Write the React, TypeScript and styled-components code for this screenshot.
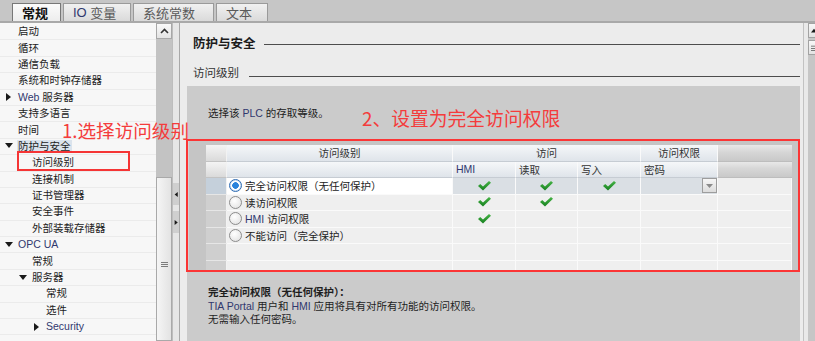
import React from "react";
import styled, { createGlobalStyle } from "styled-components";

const GlobalStyle = createGlobalStyle`
  html, body { margin: 0; padding: 0; }
  body {
    font-family: "Liberation Sans", "Noto Sans CJK SC", sans-serif;
    background: #c6c6c6;
    color: #1c1c1c;
  }
  * { box-sizing: border-box; }
`;

type NavEntry = {
  label: React.ReactNode;
  level: number;
  arrow?: "right" | "down";
  active?: boolean;
};

type AccessRow = {
  label?: React.ReactNode;
  on?: boolean;
  hmi?: boolean;
  read?: boolean;
  write?: boolean;
  dropdown?: boolean;
};

const navItems: NavEntry[] = [
  { label: "启动", level: 0 },
  { label: "循环", level: 0 },
  { label: "通信负载", level: 0 },
  { label: "系统和时钟存储器", level: 0 },
  { label: <><Latin>Web</Latin> 服务器</>, level: 0, arrow: "right" },
  { label: "支持多语言", level: 0 },
  { label: "时间", level: 0 },
  { label: "防护与安全", level: 0, arrow: "down", active: true },
  { label: "访问级别", level: 1 },
  { label: "连接机制", level: 1 },
  { label: "证书管理器", level: 1 },
  { label: "安全事件", level: 1 },
  { label: "外部装载存储器", level: 1 },
  { label: <Latin>OPC UA</Latin>, level: 0, arrow: "down" },
  { label: "常规", level: 1 },
  { label: "服务器", level: 1, arrow: "down" },
  { label: "常规", level: 2 },
  { label: "选件", level: 2 },
  { label: <Latin>Security</Latin>, level: 2, arrow: "right" },
];

const accessRows: AccessRow[] = [
  { label: "完全访问权限（无任何保护）", on: true, hmi: true, read: true, write: true, dropdown: true },
  { label: "读访问权限", hmi: true, read: true },
  { label: <><Latin>HMI</Latin> 访问权限</>, hmi: true },
  { label: "不能访问（完全保护）" },
  {},
  {},
];

function Latin({ children }: { children: React.ReactNode }) {
  return <LatinText>{children}</LatinText>;
}

const Arrow = ({ dir }: { dir: "right" | "down" | "left" | "up" }) => {
  const pts = {
    right: "1,0 6,4 1,8",
    left: "6,0 1,4 6,8",
    down: "0,1 8,1 4,6",
    up: "0,6 8,6 4,1",
  }[dir];
  return (
    <svg width="8" height="8" viewBox="0 0 8 8">
      <polygon points={pts} fill="#1a1a1a" />
    </svg>
  );
};

const Check = () => (
  <svg width="13" height="10" viewBox="0 0 13 10">
    <defs>
      <linearGradient id="ck" x1="0" y1="0" x2="0" y2="1">
        <stop offset="0" stopColor="#46b446" />
        <stop offset="1" stopColor="#16801f" />
      </linearGradient>
    </defs>
    <polygon points="0,5 2.2,3 5,5.6 11,0 13,1.8 5,9.6" fill="url(#ck)" />
  </svg>
);

const App = () => {
  return (
    <Page>
      <GlobalStyle />
      <TabBar>
        <Tab $active $w={49}>常规</Tab>
        <Tab $w={68}><Latin>IO</Latin>&nbsp;变量</Tab>
        <Tab $w={81}>系统常数</Tab>
        <Tab $w={52}>文本</Tab>
      </TabBar>

      <Body>
        <NavPanel>
          {navItems.map((item, i) => (
            <NavRow key={i} $level={item.level}>
              <ArrowSlot>{item.arrow && <Arrow dir={item.arrow} />}</ArrowSlot>
              <NavLabel $active={item.active}>{item.label}</NavLabel>
            </NavRow>
          ))}
        </NavPanel>

        <VScroll>
          <ScrollBtn>
            <svg width="9" height="6" viewBox="0 0 9 6">
              <polyline points="1,5 4.5,1.5 8,5" fill="none" stroke="#333" strokeWidth="1.6" />
            </svg>
          </ScrollBtn>
          <Track />
          <Thumb>
            <Grip>
              <span />
              <span />
              <span />
            </Grip>
          </Thumb>
        </VScroll>

        <Splitter>
          <SplitBtn><Arrow dir="left" /></SplitBtn>
          <SplitBtn><Arrow dir="right" /></SplitBtn>
        </Splitter>

        <Content>
          <TitleRow $top={10}>
            <Title $bold>防护与安全</Title>
            <Rule $gap={8} $shift={5} />
          </TitleRow>
          <TitleRow $top={12}>
            <Title>访问级别</Title>
            <Rule $gap={10} $shift={8} />
          </TitleRow>

          <GrayBox>
            <IntroRow>
              <Intro>选择该 <Latin>PLC</Latin> 的存取等级。</Intro>
              <Callout>2、设置为完全访问权限</Callout>
            </IntroRow>

            <RedFrame>
              <TableArea>
                <Grid>
                  <RowHead $header />
                  <HeadCell $center>访问级别</HeadCell>
                  <HeadCell $center $span={3}>访问</HeadCell>
                  <HeadCell $center>访问权限</HeadCell>
                  <FillHead />

                  <RowHead $header />
                  <HeadCell />
                  <HeadCell><Latin>HMI</Latin></HeadCell>
                  <HeadCell>读取</HeadCell>
                  <HeadCell>写入</HeadCell>
                  <HeadCell>密码</HeadCell>
                  <FillHead />

                  {accessRows.map((row, i) => (
                    <React.Fragment key={i}>
                      <RowHead $selected={row.on} />
                      <NameCell $selected={row.on}>
                        {row.label && (
                          <>
                            <Radio $on={row.on} />
                            <span>{row.label}</span>
                          </>
                        )}
                      </NameCell>
                      <Cell $selected={row.on} $center>{row.hmi && <Check />}</Cell>
                      <Cell $selected={row.on} $center>{row.read && <Check />}</Cell>
                      <Cell $selected={row.on} $center>{row.write && <Check />}</Cell>
                      <Cell $selected={row.on}>
                        {row.dropdown && (
                          <DropBtn>
                            <svg width="7" height="4" viewBox="0 0 7 4">
                              <polygon points="0,0 7,0 3.5,4" fill="#8a8a8a" />
                            </svg>
                          </DropBtn>
                        )}
                      </Cell>
                      <Cell />
                    </React.Fragment>
                  ))}
                </Grid>
              </TableArea>
            </RedFrame>

            <Desc>
              <strong>完全访问权限（无任何保护）：</strong>
              <div><Latin>TIA Portal</Latin> 用户和 <Latin>HMI</Latin> 应用将具有对所有功能的访问权限。</div>
              <div>无需输入任何密码。</div>
            </Desc>
          </GrayBox>
        </Content>

        <RightScroll>
          <RightStrip />
          <RightTrack>
            <SmallBtn><Arrow dir="up" /></SmallBtn>
            <SmallBtn>
              <svg width="8" height="8" viewBox="0 0 8 8">
                <rect x="0" y="1" width="8" height="1" fill="#555" />
                <rect x="0" y="4" width="8" height="1" fill="#555" />
                <rect x="0" y="7" width="8" height="1" fill="#555" />
              </svg>
            </SmallBtn>
          </RightTrack>
        </RightScroll>

        <Annotation>1.选择访问级别</Annotation>
        <MarkBox />
      </Body>
    </Page>
  );
};

const LatinText = styled.span`
  color: #30386e;
`;

const Page = styled.div`
  width: 815px;
  height: 341px;
  overflow: hidden;
  display: flex;
  flex-direction: column;
`;

const TabBar = styled.div`
  height: 23px;
  display: flex;
  align-items: flex-end;
  gap: 2px;
  padding-left: 12px;
  background: #c6c6c6;
  border-bottom: 2px solid #a9a9a9;
`;

const Tab = styled.div<{ $active?: boolean; $w: number }>`
  width: ${(p) => p.$w}px;
  height: 18px;
  display: flex;
  align-items: center;
  padding-left: 9px;
  font-size: 13px;
  font-weight: ${(p) => (p.$active ? 700 : 400)};
  color: ${(p) => (p.$active ? "#111" : "#5a5a5a")};
  background: ${(p) =>
    p.$active
      ? "linear-gradient(#fbfbfb, #ededed)"
      : "linear-gradient(#f1f1f1, #dadada)"};
  border: 1px solid ${(p) => (p.$active ? "#777" : "#9a9a9a")};
  border-bottom: none;
`;

const Body = styled.div`
  position: relative;
  flex: 1;
  display: flex;
  min-height: 0;
`;

const NavPanel = styled.div`
  width: 156px;
  background: #f7f7f7;
  padding-top: 1px;
  overflow: hidden;
`;

const NavRow = styled.div<{ $level: number }>`
  height: 16.4px;
  display: flex;
  align-items: center;
  padding-left: ${(p) => 4 + p.$level * 14}px;
  border-bottom: 1px solid #ebebeb;
  font-size: 10.5px;
  white-space: nowrap;
`;

const ArrowSlot = styled.div`
  width: 14px;
  display: flex;
  align-items: center;
  padding-left: 1px;
`;

const NavLabel = styled.span<{ $active?: boolean }>`
  line-height: 13px;
  padding: 0 1px;
  margin-left: -1px;
  background: ${(p) => (p.$active ? "#dbe3ec" : "transparent")};
`;

const VScroll = styled.div`
  width: 16px;
  display: flex;
  flex-direction: column;
  background: #c4c4c4;
`;

const ScrollBtn = styled.div`
  height: 16px;
  display: flex;
  align-items: center;
  justify-content: center;
  background: linear-gradient(#fafafa, #e3e3e3);
  border: 1px solid #a7a7a7;
`;

const Track = styled.div`
  height: 138px;
  background: #c3c3c3;
`;

const Thumb = styled.div`
  flex: 1;
  display: flex;
  justify-content: center;
  padding-top: 84px;
  background: linear-gradient(90deg, #f5f5f5, #e3e3e3);
  border: 1px solid #a9a9a9;
`;

const Grip = styled.div`
  display: flex;
  flex-direction: column;
  gap: 1px;
  span {
    display: block;
    width: 7px;
    height: 1px;
    background: #7c7c7c;
  }
`;

const Splitter = styled.div`
  width: 8px;
  display: flex;
  flex-direction: column;
  gap: 6px;
  padding-top: 160px;
  background: #e6e6e6;
  border-left: 1px solid #bdbdbd;
  border-right: 1px solid #a8a8a8;
`;

const SplitBtn = styled.div`
  height: 22px;
  display: flex;
  align-items: center;
  justify-content: center;
  background: #cfcfcf;
  svg {
    width: 5px;
    height: 5px;
  }
`;

const Content = styled.div`
  flex: 1;
  min-width: 0;
  display: flex;
  flex-direction: column;
  padding: 0 3px 0 7px;
  background: #ececec;
`;

const TitleRow = styled.div<{ $top: number }>`
  height: 18px;
  margin-top: ${(p) => p.$top}px;
  padding-left: 6px;
  display: flex;
  align-items: center;
`;

const Title = styled.span<{ $bold?: boolean }>`
  font-size: ${(p) => (p.$bold ? "12.5px" : "11.5px")};
  font-weight: ${(p) => (p.$bold ? 700 : 400)};
  color: ${(p) => (p.$bold ? "#1c1c1c" : "#333")};
  white-space: nowrap;
`;

const Rule = styled.div<{ $gap: number; $shift: number }>`
  flex: 1;
  height: 1px;
  margin-left: ${(p) => p.$gap}px;
  margin-top: ${(p) => p.$shift}px;
  background: #4d4d4d;
`;

const GrayBox = styled.div`
  flex: 1;
  margin-top: 5px;
  background: #cbcbcb;
`;

const IntroRow = styled.div`
  height: 53px;
  display: flex;
  align-items: flex-start;
  padding: 20px 0 0 21px;
`;

const Intro = styled.span`
  width: 154px;
  font-size: 10.5px;
  line-height: 14px;
  color: #222;
`;

const Callout = styled.span`
  margin-top: 1px;
  font-family: "Noto Sans CJK SC", sans-serif;
  font-size: 18.8px;
  line-height: 22px;
  color: #f43c3c;
  white-space: nowrap;
`;

const RedFrame = styled.div`
  width: 614px;
  height: 133px;
  margin-left: -1px;
  border: 2px solid #fb3535;
  background: #d3d3d3;
  padding: 0 0 0 1px;
`;

const TableArea = styled.div`
  height: 100%;
  overflow: hidden;
  padding: 4px 6px 0 17px;
  background: #c5c5c5;
`;

const Grid = styled.div`
  display: grid;
  grid-template-columns: 21px 226px 63px 62px 63px 77px 74px;
  grid-auto-rows: 16.5px;
  font-size: 10.5px;
  color: #222;
`;

const RowHead = styled.div<{ $header?: boolean; $selected?: boolean }>`
  border-right: 1px solid #f2f2f2;
  border-bottom: 1px solid ${(p) => (p.$header ? "#c3c3c3" : "#e6e6e6")};
  background: ${(p) =>
    p.$header
      ? "linear-gradient(#f4f4f4, #dadada)"
      : p.$selected
      ? "#c5d0db"
      : "#cfcfcf"};
`;

const HeadCell = styled.div<{ $center?: boolean; $span?: number }>`
  grid-column: span ${(p) => p.$span ?? 1};
  display: flex;
  align-items: center;
  justify-content: ${(p) => (p.$center ? "center" : "flex-start")};
  padding-left: ${(p) => (p.$center ? 0 : 3)}px;
  background: linear-gradient(#f5f7f9, #dfe4ea);
  border-right: 1px solid #fafafa;
  border-bottom: 1px solid #c6ccd3;
  color: #333;
  white-space: nowrap;
`;

const FillHead = styled.div`
  background: linear-gradient(#e8e8e8 0%, #d6d6d6 45%, #c9c9c9 100%);
  border-bottom: 1px solid #bdbdbd;
`;

const Cell = styled.div<{ $selected?: boolean; $center?: boolean }>`
  display: flex;
  align-items: center;
  justify-content: ${(p) => (p.$center ? "center" : "flex-start")};
  background: ${(p) => (p.$selected ? "#dadfe4" : "#efefef")};
  border-right: 1px solid #fafafa;
  border-bottom: 1px solid #fafafa;
`;

const NameCell = styled(Cell)`
  gap: 3px;
  padding-left: 2px;
  background: ${(p) => (p.$selected ? "#ffffff" : "#efefef")};
  white-space: nowrap;
`;

const Radio = styled.span<{ $on?: boolean }>`
  width: 13px;
  height: 13px;
  flex: none;
  border-radius: 50%;
  border: 1px solid ${(p) => (p.$on ? "#2f6cb3" : "#8c8c8c")};
  background: ${(p) =>
    p.$on
      ? "radial-gradient(circle, #2a83dc 0 3px, #ffffff 3.6px 4.4px, #cfe0f3 5px)"
      : "radial-gradient(circle at 40% 35%, #ffffff, #dedede)"};
`;

const DropBtn = styled.div`
  width: 15px;
  height: 15px;
  margin-left: auto;
  display: flex;
  align-items: center;
  justify-content: center;
  background: linear-gradient(#f6f6f6, #dcdcdc);
  border: 1px solid #9d9d9d;
`;

const Desc = styled.div`
  padding: 14px 0 0 21px;
  font-size: 10.5px;
  line-height: 13.5px;
  color: #1e1e1e;
  strong {
    display: block;
    font-weight: 700;
  }
`;

const RightScroll = styled.div`
  width: 12px;
  display: flex;
`;

const RightStrip = styled.div`
  width: 5px;
  background: #e9e9e9;
  border-left: 1px solid #c2c2c2;
`;

const RightTrack = styled.div`
  flex: 1;
  display: flex;
  flex-direction: column;
  gap: 2px;
  background: #c6c6c6;
  overflow: hidden;
`;

const SmallBtn = styled.div`
  width: 14px;
  height: 15px;
  flex: none;
  display: flex;
  align-items: center;
  padding-left: 2px;
  background: linear-gradient(#f7f7f7, #e2e2e2);
  border: 1px solid #a2a2a2;
  svg {
    width: 6px;
    height: 6px;
  }
`;

const Annotation = styled.span`
  position: absolute;
  left: 62px;
  top: 96px;
  font-family: "Noto Sans CJK SC", sans-serif;
  font-size: 18.6px;
  line-height: 22px;
  color: #f43c3c;
  white-space: nowrap;
  pointer-events: none;
`;

const MarkBox = styled.div`
  position: absolute;
  left: 17px;
  top: 128px;
  width: 113px;
  height: 20px;
  border: 2px solid #f53535;
  pointer-events: none;
`;

export default App;
